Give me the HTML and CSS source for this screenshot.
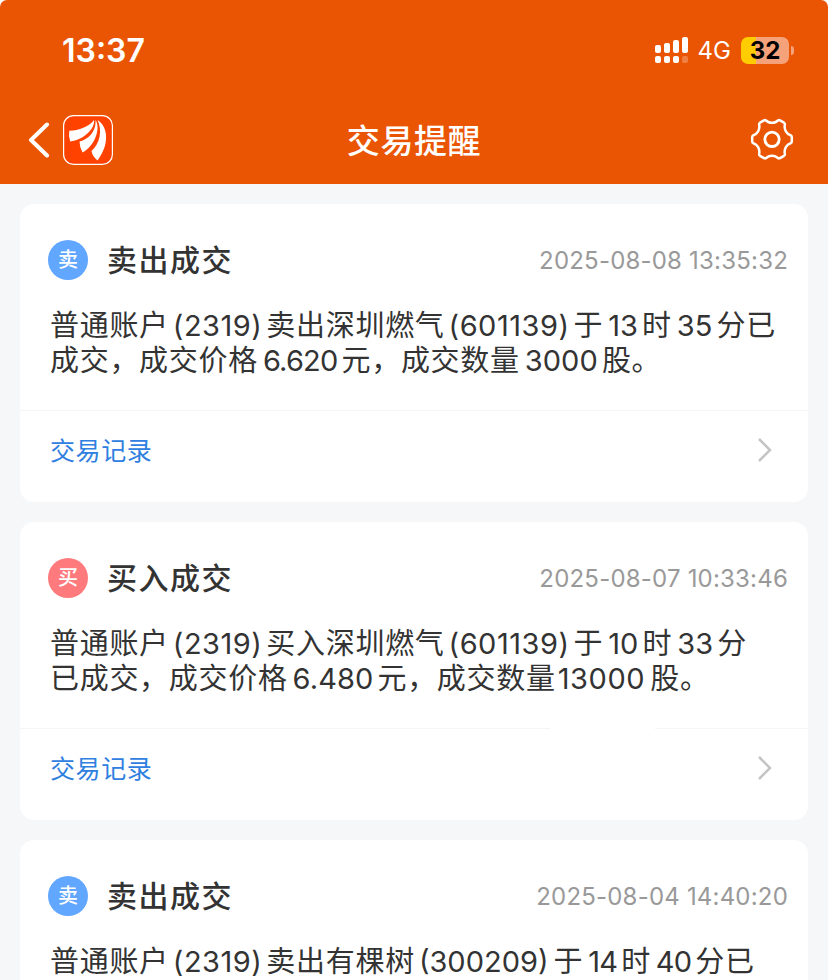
FILE: index.html
```html
<!DOCTYPE html>
<html lang="zh-CN">
<head>
  <meta charset="UTF-8">
  <meta name="viewport" content="width=device-width, initial-scale=1.0">
  <title>交易提醒</title>
  <link rel="stylesheet" href="styles.css">
</head>
<body>
  <header class="header">
    <div class="status-bar">
      <span class="clock">13:37</span>
      <div class="status-right">
        <svg class="signal" width="34" height="27" viewBox="0 0 34 27" fill="#fff">
          <rect x="0" y="8" width="6" height="8" rx="2"/>
          <rect x="9" y="6" width="6" height="10" rx="2"/>
          <rect x="18" y="3" width="6" height="13" rx="2"/>
          <rect x="27" y="0" width="6" height="16" rx="2"/>
          <rect x="0" y="19" width="6" height="7" rx="2"/>
          <rect x="9" y="19" width="6" height="7" rx="2"/>
          <rect x="18" y="19" width="6" height="7" rx="2"/>
          <rect x="27" y="19" width="6" height="7" rx="2" opacity="0.25"/>
        </svg>
        <span class="network">4G</span>
        <span class="battery">32</span>
        <span class="battery-cap"></span>
      </div>
    </div>
    <div class="nav-bar">
      <div class="nav-left">
        <svg class="back" width="22" height="36" viewBox="0 0 22 36" fill="none" stroke="#fff" stroke-width="4" stroke-linecap="round" stroke-linejoin="round">
          <path d="M19 2.500 L3 18 L19 33.500"/>
        </svg>
        <svg class="logo" width="50" height="50" viewBox="0 0 50 50">
          <rect x="0.6" y="0.6" width="48.8" height="48.8" rx="10" fill="#ff4200" stroke="#fff" stroke-width="1.2"/>
          <g fill="#fff">
            <path d="M6.300 15.800C16 15.300 26 12 31 5C32.300 14 20 25 7.200 26.500Q5.300 21 6.300 15.800Z"/>
            <path d="M32.500 5C38 13 32 31 19.500 37.500Q16.500 32 16.500 26.500C25.500 24.500 33.500 16 32.500 5Z"/>
            <path d="M34.500 5C45.500 12 46.500 30 34.500 45.500Q29.500 41.500 28.500 36C37 29 39.500 15 34.500 5Z"/>
          </g>
        </svg>
      </div>
      <h1 class="nav-title">交易提醒</h1>
      <svg class="gear" width="42" height="42" viewBox="0 0 42 42" fill="none" stroke="#fff" stroke-width="2.500" stroke-linejoin="round">
        <path d="M15 1.300C18 4.700 24 4.700 27 1.300Q28 .9 29 1.400L33 3.700Q34.200 4.500 33.800 6C33 10.500 35.500 15 39.600 16.200Q40.800 16.700 40.800 18V22.500Q40.800 23.800 39.600 24.300C35.500 25.500 33 30 33.800 34.500Q34.200 36 33 36.800L29 39.100Q28 39.600 27 39.200C24 35.800 18 35.800 15 39.200Q14 39.600 13 39.100L9 36.800Q7.800 36 8.200 34.500C9 30 6.500 25.500 2.400 24.300Q1.200 23.800 1.200 22.500V18Q1.200 16.700 2.400 16.200C6.500 15 9 10.500 8.200 6Q7.800 4.500 9 3.700L13 1.400Q14 .9 15 1.300Z"/>
        <circle cx="21" cy="20.300" r="7.200" stroke-width="2.800"/>
      </svg>
    </div>
  </header>

  <main class="list">
    <section class="card">
      <div class="card-head">
        <span class="badge sell">卖</span>
        <h2 class="card-title">卖出成交</h2>
        <time class="card-time">2025-08-08 13:35:32</time>
      </div>
      <p class="card-text">
        普通账户<span class="num code">(2319)</span>卖出深圳燃气<span class="num code">(601139)</span>于<span class="num">13</span>时<span class="num">35</span>分已<br>
        成交，成交价格<span class="num narrow">6.620</span>元，成交数量<span class="num">3000</span>股。
      </p>
      <a class="card-link">
        <span>交易记录</span>
        <svg class="arrow" width="16" height="26" viewBox="0 0 16 26"><path d="M2 2 L13 13 L2 24"/></svg>
      </a>
    </section>

    <section class="card">
      <div class="card-head">
        <span class="badge buy">买</span>
        <h2 class="card-title">买入成交</h2>
        <time class="card-time">2025-08-07 10:33:46</time>
      </div>
      <p class="card-text">
        普通账户<span class="num code">(2319)</span>买入深圳燃气<span class="num code">(601139)</span>于<span class="num">10</span>时<span class="num">33</span>分<br>
        已成交，成交价格<span class="num">6.480</span>元，成交数量<span class="num tight">13000</span>股。
      </p>
      <a class="card-link broken">
        <span>交易记录</span>
        <svg class="arrow" width="16" height="26" viewBox="0 0 16 26"><path d="M2 2 L13 13 L2 24"/></svg>
      </a>
    </section>

    <section class="card last">
      <div class="card-head">
        <span class="badge sell">卖</span>
        <h2 class="card-title">卖出成交</h2>
        <time class="card-time">2025-08-04 14:40:20</time>
      </div>
      <p class="card-text">
        普通账户<span class="num code">(2319)</span>卖出有棵树<span class="num narrow-code">(300209)</span>于<span class="num narrow">14</span>时<span class="num narrow">40</span>分已
      </p>
    </section>
  </main>
</body>
</html>
```
FILE: styles.css
```css
* {
  box-sizing: border-box;
}

body {
  margin: 0;
  height: 980px;
  overflow: hidden;
  background-color: #f6f7f9;
  font-family: Inter, "Noto Sans CJK SC", sans-serif;
  color: #333;
}

.header {
  height: 184px;
  background-color: #ea5504;
  color: #fff;
  border-radius: 7px 7px 0 0;
  box-shadow: 0 -10px 0 #fff;
}

.status-bar {
  height: 96px;
  padding: 4px 34px 0 62px;
  display: flex;
  align-items: center;
  justify-content: space-between;
}

.clock {
  font-size: 32px;
  font-weight: 600;
}

.status-right {
  display: flex;
  align-items: center;
}

.network {
  margin-left: 9px;
  font-size: 24px;
}

.battery {
  width: 48px;
  height: 27px;
  margin-left: 10px;
  border-radius: 7px;
  background: linear-gradient(to right, #ffcc00 15px, #f5a27a 15px);
  color: #000;
  font-size: 24px;
  font-weight: 700;
  line-height: 27px;
  text-align: center;
}

.battery-cap {
  width: 3px;
  height: 9px;
  margin-left: 2px;
  border-radius: 0 4px 4px 0;
  background-color: #f5a27a;
}

.nav-bar {
  height: 88px;
  padding: 0 35px 0 28px;
  display: grid;
  grid-template-columns: 1fr auto 1fr;
  align-items: center;
}

.nav-left {
  display: flex;
  align-items: center;
  gap: 13px;
}

.nav-title {
  margin: 0;
  padding: 0 0 3px 7px;
  font-size: 33px;
  font-weight: 500;
  letter-spacing: 0.6px;
}

.gear {
  justify-self: end;
  overflow: visible;
}

.list {
  padding: 20px 20px 0;
  display: flex;
  flex-direction: column;
  gap: 20px;
}

.card {
  height: 298px;
  flex-shrink: 0;
  border-radius: 14px;
  background-color: #fff;
  display: flex;
  flex-direction: column;
}

.card.last {
  height: 140px;
  border-radius: 14px 14px 0 0;
}

.card-head {
  padding: 36px 20px 0 28px;
  height: 76px;
  display: flex;
  align-items: center;
}

.badge {
  width: 40px;
  height: 40px;
  border-radius: 50%;
  color: #fff;
  font-size: 20px;
  font-weight: 500;
  line-height: 41px;
  text-align: center;
}

.sell {
  background-color: #61a6ff;
}

.buy {
  background-color: #ff7a7d;
}

.card-title {
  margin: 0 auto 0 19px;
  padding-bottom: 4px;
  font-size: 30px;
  font-weight: 500;
  letter-spacing: 1.5px;
}

.card-time {
  color: #999;
  font-size: 24px;
  letter-spacing: 0.2px;
}

.card-text {
  height: 130px;
  margin: 0;
  padding: 28px 0 0 30px;
  font-size: 29px;
  line-height: 35px;
  letter-spacing: 0.7px;
  white-space: nowrap;
}

.card.last .card-text {
  height: 64px;
}

.num {
  margin: 0 4px 0 5px;
  letter-spacing: 0.1px;
}

.num.code {
  margin: 0 4px 0 4px;
  letter-spacing: 0.5px;
}

.num.narrow {
  letter-spacing: -0.8px;
}

.num.narrow-code {
  margin: 0 5px 0 4px;
  letter-spacing: 0;
}

.num.tight {
  margin: 0 5px 0 2px;
  letter-spacing: 0.6px;
}

.card-link {
  flex: 1;
  padding: 0 35px 14px 30px;
  border-top: 1px solid #f5f5f6;
  display: flex;
  align-items: center;
  justify-content: space-between;
  color: #2f80e0;
  font-size: 25px;
  letter-spacing: 0.6px;
}

.card-link span {
  padding-bottom: 2px;
}

/* divider with a gap in the middle */
.card-link.broken {
  border-image: linear-gradient(to right, #f5f5f6 530px, transparent 530px, transparent 634px, #f5f5f6 634px) 1;
}

.arrow {
  fill: none;
  stroke: #c4c4c4;
  stroke-width: 2.5;
}
```
